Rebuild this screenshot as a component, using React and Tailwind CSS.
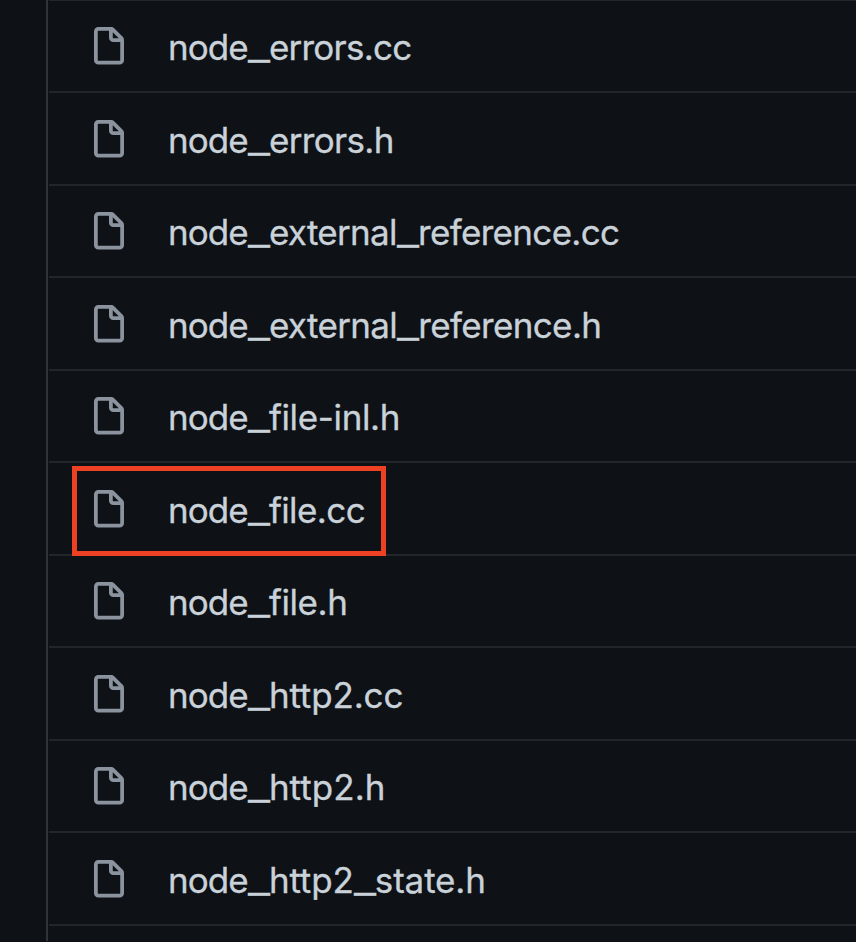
import { Fragment } from 'react';

const files = [
  { name: 'node_errors.cc', tracking: 'tracking-[-0.75px]' },
  { name: 'node_errors.h', tracking: 'tracking-[-0.65px]' },
  { name: 'node_external_reference.cc', tracking: 'tracking-[-0.68px]' },
  { name: 'node_external_reference.h', tracking: 'tracking-[-0.65px]' },
  { name: 'node_file-inl.h', tracking: 'tracking-[-0.35px]' },
  { name: 'node_file.cc', tracking: 'tracking-[-0.6px]', marked: true },
  { name: 'node_file.h', tracking: 'tracking-[-0.4px]' },
  { name: 'node_http2.cc', tracking: 'tracking-[-0.15px]' },
  { name: 'node_http2.h', tracking: 'tracking-[0.05px]' },
  { name: 'node_http2_state.h', tracking: 'tracking-[-0.15px]' },
];

function FileIcon() {
  return (
    <svg className="mt-[2.5px] h-10 w-10 shrink-0" viewBox="0 0 16 16" fill="#8b949e">
      <path fillRule="evenodd" d="M3.75 1.5a.25.25 0 00-.25.25v11.5c0 .138.112.25.25.25h8.5a.25.25 0 00.25-.25V6H9.75A1.75 1.75 0 018 4.25V1.5H3.75zm5.75.56v2.19c0 .138.112.25.25.25h2.19L9.5 2.06zM2 1.75C2 .784 2.784 0 3.75 0h5.086c.464 0 .909.184 1.237.513l3.414 3.414c.329.328.513.773.513 1.237v8.086A1.75 1.75 0 0112.25 15h-8.5A1.75 1.75 0 012 13.25V1.75z" />
    </svg>
  );
}

function FileName({ name, tracking }) {
  return (
    <span className="ml-[39px] mt-[3px] whitespace-nowrap font-['Inter',sans-serif] text-[35px] leading-[40px] font-normal text-[#c9d1d9] [-webkit-text-stroke:0.3px_#c9d1d9]">
      {name.split('_').map((part, i) => (
        <Fragment key={i}>
          {i > 0 && <span className="mr-[6px] inline-block origin-left scale-x-[1.38] tracking-[-0.8px]">_</span>}
          <span className={i > 0 ? tracking : 'tracking-[-0.95px]'}>{part}</span>
        </Fragment>
      ))}
    </span>
  );
}

export default function App() {
  return (
    <div className="h-[942px] w-[856px] overflow-hidden bg-[#0e1116] pl-[46px]">
      <div className="h-full border-l-2 border-[#30343a] pl-px">
        <div className="-mt-[1.5px]">
          {files.map(({ name, tracking, marked }) => (
            <div key={name} className="relative flex h-[92.5px] items-center border-t-2 border-[#22262c] pl-10">
              <FileIcon />
              <FileName name={name} tracking={tracking} />
              {marked && <div className="absolute left-[23px] top-[3px] z-10 h-[90px] w-[314px] border-[5px] border-[#ee4023]" />}
            </div>
          ))}
          <div className="border-t-2 border-[#22262c]" />
        </div>
      </div>
    </div>
  );
}
